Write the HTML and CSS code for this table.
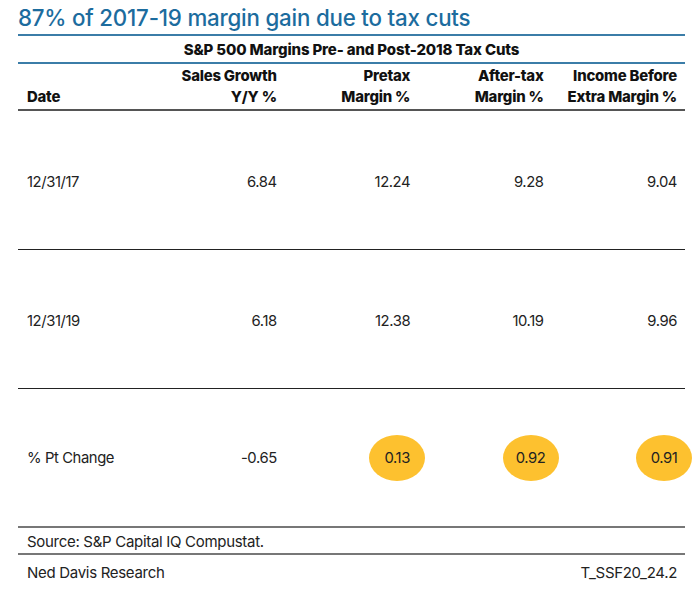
FILE: index.html
```html
<!DOCTYPE html>
<html lang="en">
<head>
<meta charset="utf-8">
<title>87% of 2017-19 margin gain due to tax cuts</title>
<link rel="stylesheet" href="styles.css">
</head>
<body>
<div class="page">
  <h1 class="title">87% of 2017-19 margin gain due to tax cuts</h1>
  <div class="subtitle">S&amp;P 500 Margins Pre- and Post-2018 Tax Cuts</div>
  <div class="row head">
    <div class="cell left">Date</div>
    <div class="cell">Sales Growth<br>Y/Y %</div>
    <div class="cell">Pretax<br>Margin %</div>
    <div class="cell">After-tax<br>Margin %</div>
    <div class="cell">Income Before<br>Extra Margin %</div>
  </div>
  <div class="row data">
    <div class="cell left">12/31/17</div>
    <div class="cell">6.84</div>
    <div class="cell">12.24</div>
    <div class="cell">9.28</div>
    <div class="cell">9.04</div>
  </div>
  <div class="row data">
    <div class="cell left">12/31/19</div>
    <div class="cell">6.18</div>
    <div class="cell">12.38</div>
    <div class="cell">10.19</div>
    <div class="cell">9.96</div>
  </div>
  <div class="row data last">
    <div class="cell left">% Pt Change</div>
    <div class="cell">-0.65</div>
    <div class="cell"><span class="badge">0.13</span></div>
    <div class="cell"><span class="badge">0.92</span></div>
    <div class="cell"><span class="badge">0.91</span></div>
  </div>
  <div class="source">Source: S&amp;P Capital IQ Compustat.</div>
  <div class="footer">
    <span>Ned Davis Research</span>
    <span>T_SSF20_24.2</span>
  </div>
</div>
</body>
</html>
```

FILE: styles.css
```css
* { box-sizing: border-box; }
html, body { margin: 0; padding: 0; background: #fff; }
body {
  font-family: Inter, "Noto Sans", Arial, sans-serif;
  color: #222;
}
.page {
  width: 694px;
  padding: 0 9px 0 18px;
}
.title {
  margin: 0;
  height: 36px;
  padding-top: 5px;
  font-size: 22.3px;
  font-weight: 500;
  color: #1c6c9e;
  letter-spacing: -0.2px;
  line-height: 26px;
  border-bottom: 2px solid #3b7da8;
}
.subtitle {
  height: 28px;
  display: flex;
  align-items: center;
  justify-content: center;
  padding-top: 1px;
  font-size: 15px;
  font-weight: 800;
  color: #111;
  letter-spacing: -0.15px;
  border-bottom: 2px solid #3b7da8;
}
.row {
  display: grid;
  grid-template-columns: repeat(5, 1fr);
}
.cell {
  text-align: right;
  padding-right: 8px;
}
.cell.left {
  text-align: left;
  padding-left: 9px;
  padding-right: 0;
}
.head {
  height: 47px;
  align-items: end;
  padding-bottom: 1px;
  font-size: 14.9px;
  font-weight: 800;
  line-height: 21px;
  color: #111;
  letter-spacing: -0.2px;
  border-bottom: 2px solid #555;
}
.data {
  height: 139px;
  align-items: center;
  padding-top: 3px;
  font-size: 14.8px;
  font-weight: 400;
  letter-spacing: -0.4px;
  color: #222;
  border-bottom: 1px solid #222;
}
.data.last {
  border-bottom: 2px solid #777;
  padding-top: 1px;
}
.badge {
  display: inline-flex;
  align-items: center;
  justify-content: center;
  width: 56px;
  height: 46px;
  margin-right: -15px;
  border-radius: 50%;
  background: #fdc12f;
}
.source {
  height: 27px;
  display: flex;
  align-items: center;
  padding-left: 9px;
  padding-top: 2px;
  font-size: 15px;
  letter-spacing: -0.3px;
  border-bottom: 2px solid #777;
}
.footer {
  height: 32px;
  display: flex;
  align-items: center;
  justify-content: space-between;
  padding: 2px 8px 0 9px;
  font-size: 15px;
  letter-spacing: -0.3px;
}
```
